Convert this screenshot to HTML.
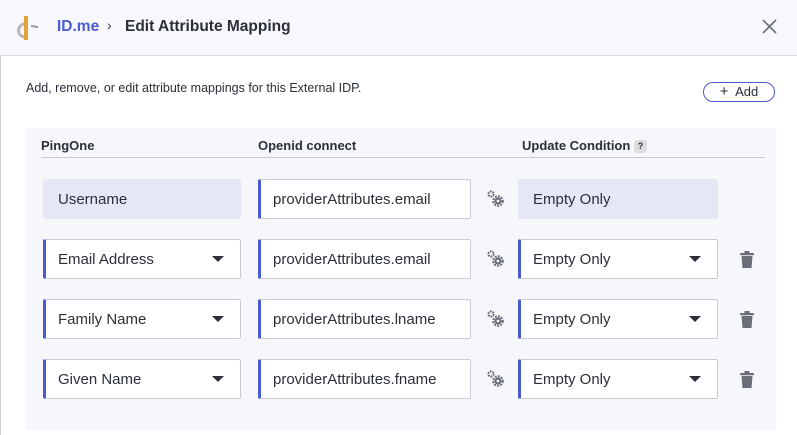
<!DOCTYPE html>
<html><head><style>
*{box-sizing:border-box;margin:0;padding:0}
body{width:797px;height:435px;overflow:hidden;background:#fff;font-family:"Liberation Sans",sans-serif;color:#2b2f3a;position:relative}
.hdr{position:absolute;left:0;top:0;width:797px;height:56px;background:#f8f8fc;border-bottom:1px solid #dcdce4}
.lb{position:absolute;left:0;top:56px;width:1px;height:379px;background:#d0d0d8}
.abs{position:absolute}
.panel{position:absolute;left:26px;top:128px;width:750px;height:302px;background:#f6f7fb}
.th{position:absolute;top:138px;font-size:13px;font-weight:bold;color:#2b2f3a}
.line{position:absolute;left:41px;top:157px;width:724px;height:1px;background:#c8cad2}
.box{position:absolute;height:40px;font-size:15px;line-height:41px;padding-left:15px;color:#2b2f3a}
.ro{background:#e5e7f5;border-radius:3px}
.in{background:#fff;border:1px solid #c9ccd6;border-left:3px solid #4a5bd0;border-radius:2px;line-height:39px;padding-left:12px}
.car{position:absolute;right:16px;top:16px;width:0;height:0;border-left:6px solid transparent;border-right:6px solid transparent;border-top:6px solid #2b2f3a}
</style></head><body>
<div class="hdr"></div>
<div class="lb"></div>
<svg class="abs" style="left:14px;top:14px" width="30" height="28" viewBox="0 0 30 28">
<path d="M11 10 A6.5 6.5 0 1 0 11 23" fill="none" stroke="#b8b8b8" stroke-width="3"/>
<rect x="10" y="2" width="4" height="24" fill="#e8a23a"/>
<path d="M17 12 L24 13" stroke="#999" stroke-width="2"/>
</svg>
<div class="abs" style="left:57px;top:18px;font-size:15.5px;color:#4a5bd0;font-weight:bold">ID.me</div>
<div class="abs" style="left:107px;top:17px;font-size:14px;color:#333">›</div>
<div class="abs" style="left:125px;top:18px;font-size:15.5px;color:#2b2f3a;font-weight:bold">Edit Attribute Mapping</div>
<svg class="abs" style="left:762px;top:19px" width="15" height="15"><path d="M1 1L14 14M14 1L1 14" stroke="#6b6e78" stroke-width="1.6"/></svg>
<div class="abs" style="left:26px;top:81px;font-size:12.5px;color:#2b2f3a">Add, remove, or edit attribute mappings for this External IDP.</div>
<div class="abs" style="left:703px;top:82px;width:72px;height:20px;border:1px solid #4a5bd0;border-radius:10px;font-size:13px;line-height:18px;text-align:center;color:#2b2f3a"><span style="font-size:15px">+</span>&nbsp; Add</div>
<div class="panel"></div>
<div class="th" style="left:41px">PingOne</div>
<div class="th" style="left:258px">Openid connect</div>
<div class="th" style="left:522px">Update Condition <span style="display:inline-block;width:13px;height:13px;background:#ddd;border-radius:3px;font-size:9px;text-align:center;line-height:13px;vertical-align:1px">?</span></div>
<div class="line"></div>

<div class="box ro" style="left:43px;top:179px;width:198px">Username</div>
<div class="box in" style="left:258px;top:179px;width:213px">providerAttributes.email</div>
<div class="box ro" style="left:518px;top:179px;width:200px">Empty Only</div>

<div class="box in" style="left:43px;top:239px;width:198px">Email Address<div class="car"></div></div>
<div class="box in" style="left:258px;top:239px;width:213px">providerAttributes.email</div>
<div class="box in" style="left:518px;top:239px;width:200px">Empty Only<div class="car"></div></div>

<div class="box in" style="left:43px;top:299px;width:198px">Family Name<div class="car"></div></div>
<div class="box in" style="left:258px;top:299px;width:213px">providerAttributes.lname</div>
<div class="box in" style="left:518px;top:299px;width:200px">Empty Only<div class="car"></div></div>

<div class="box in" style="left:43px;top:359px;width:198px">Given Name<div class="car"></div></div>
<div class="box in" style="left:258px;top:359px;width:213px">providerAttributes.fname</div>
<div class="box in" style="left:518px;top:359px;width:200px">Empty Only<div class="car"></div></div>

<svg width="0" height="0" style="position:absolute"><defs>
<g id="gear"><circle cx="5" cy="5" r="2.6" fill="none" stroke="#6b6e78" stroke-width="2" stroke-dasharray="1.8 0.9"/><circle cx="12" cy="12" r="3.6" fill="#6b6e78"/><circle cx="12" cy="12" r="1.4" fill="#f6f7fb"/><circle cx="12" cy="12" r="4.8" fill="none" stroke="#6b6e78" stroke-width="2" stroke-dasharray="2 1.2"/></g>
<g id="trash"><rect x="0" y="2" width="14" height="2.2" rx="1" fill="#6b6e78"/><rect x="4.5" y="0" width="5" height="2" fill="#6b6e78"/><path d="M1.5 5H12.5L11.5 17H2.5Z" fill="#6b6e78"/></g>
</defs></svg>
<svg class="abs" style="left:486px;top:189px" width="19" height="19"><use href="#gear"/></svg>
<svg class="abs" style="left:486px;top:249px" width="19" height="19"><use href="#gear"/></svg>
<svg class="abs" style="left:486px;top:309px" width="19" height="19"><use href="#gear"/></svg>
<svg class="abs" style="left:486px;top:369px" width="19" height="19"><use href="#gear"/></svg>
<svg class="abs" style="left:740px;top:251px" width="14" height="17"><use href="#trash"/></svg>
<svg class="abs" style="left:740px;top:311px" width="14" height="17"><use href="#trash"/></svg>
<svg class="abs" style="left:740px;top:371px" width="14" height="17"><use href="#trash"/></svg>
</body></html>
